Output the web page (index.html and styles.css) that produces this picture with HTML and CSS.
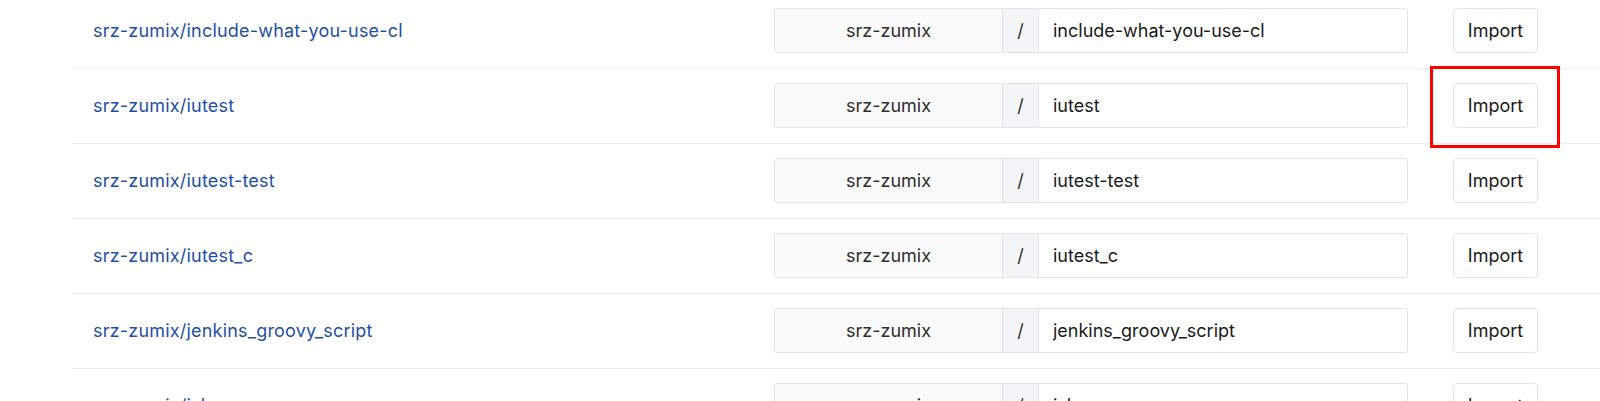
FILE: index.html
```html
<!DOCTYPE html>
<html lang="en">
  <head>
    <meta charset="UTF-8" />
    <title>Import repositories</title>
    <link rel="stylesheet" href="styles.css">
  </head>
  <body>
    <div class="repo-list">
      <div class="repo-row">
        <a class="repo-link" href="#">srz-zumix/include-what-you-use-cl</a>
        <div class="target-group">
          <span class="target-ns">srz-zumix</span>
          <span class="target-sep">/</span>
          <input class="target-name" type="text" value="include-what-you-use-cl" />
        </div>
        <div class="import-cell"><button class="btn-import">Import</button></div>
      </div>

      <div class="repo-row">
        <a class="repo-link" href="#">srz-zumix/iutest</a>
        <div class="target-group">
          <span class="target-ns">srz-zumix</span>
          <span class="target-sep">/</span>
          <input class="target-name" type="text" value="iutest" />
        </div>
        <!-- highlighted in the screenshot -->
        <div class="import-cell highlight"><button class="btn-import">Import</button></div>
      </div>

      <div class="repo-row">
        <a class="repo-link" href="#">srz-zumix/iutest-test</a>
        <div class="target-group">
          <span class="target-ns">srz-zumix</span>
          <span class="target-sep">/</span>
          <input class="target-name" type="text" value="iutest-test" />
        </div>
        <div class="import-cell"><button class="btn-import">Import</button></div>
      </div>

      <div class="repo-row">
        <a class="repo-link" href="#">srz-zumix/iutest_c</a>
        <div class="target-group">
          <span class="target-ns">srz-zumix</span>
          <span class="target-sep">/</span>
          <input class="target-name" type="text" value="iutest_c" />
        </div>
        <div class="import-cell"><button class="btn-import">Import</button></div>
      </div>

      <div class="repo-row">
        <a class="repo-link" href="#">srz-zumix/jenkins_groovy_script</a>
        <div class="target-group">
          <span class="target-ns">srz-zumix</span>
          <span class="target-sep">/</span>
          <input class="target-name" type="text" value="jenkins_groovy_script" />
        </div>
        <div class="import-cell"><button class="btn-import">Import</button></div>
      </div>

      <div class="repo-row">
        <a class="repo-link" href="#">srz-zumix/jsl</a>
        <div class="target-group">
          <span class="target-ns">srz-zumix</span>
          <span class="target-sep">/</span>
          <input class="target-name" type="text" value="jsl" />
        </div>
        <div class="import-cell"><button class="btn-import">Import</button></div>
      </div>
    </div>
  </body>
</html>
```

FILE: styles.css
```css
body {
  margin: 0;
  font-family: Inter, "Noto Sans", sans-serif;
  font-size: 18px;
  color: #2e2e2e;
  background: #fff;
  overflow: hidden;
}

/* La lista empieza cortada por arriba, como en la captura */
.repo-list {
  margin: -6px 0 0 72px;
}

.repo-row {
  display: flex;
  align-items: center;
  padding: 14px 62px 15px 21px;
  border-bottom: 1px solid #ebebeb;
}

.repo-link {
  flex: 1;
  color: #1f4fa3;
  text-decoration: none;
  letter-spacing: 0.2px;
}

.target-group {
  display: flex;
  width: 634px;
  height: 45px;
  box-sizing: border-box;
  border: 1px solid #e3e3e3;
  border-radius: 3px;
  overflow: hidden;
}

.target-ns {
  width: 227px;
  display: flex;
  align-items: center;
  justify-content: center;
  background: #fafafa;
}

.target-sep {
  width: 35px;
  display: flex;
  align-items: center;
  justify-content: center;
  background: #f4f5f7;
  border-left: 1px solid #e3e3e3;
  border-right: 1px solid #e3e3e3;
}

.target-name {
  flex: 1;
  min-width: 0;
  border: 0;
  padding: 0 14px;
  font: inherit;
  color: #1a1a1a;
  background: #fff;
  outline: none;
}

.import-cell {
  position: relative;
  margin-left: 45px;
}

.btn-import {
  width: 85px;
  height: 45px;
  font: inherit;
  color: #1a1a1a;
  background: #fff;
  border: 1px solid #e3e3e3;
  border-radius: 4px;
  padding: 0;
  cursor: pointer;
}

/* Recuadro rojo de anotación */
.highlight::after {
  content: "";
  position: absolute;
  left: -23px;
  right: -22px;
  top: -17px;
  bottom: -20px;
  border: 3px solid #ff0000;
  pointer-events: none;
}
```
